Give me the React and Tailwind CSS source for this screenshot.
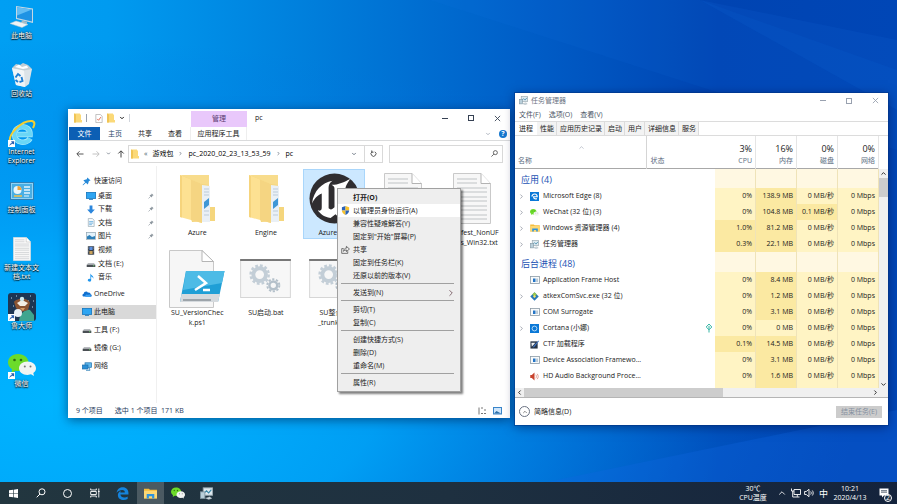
import { ChevronDown, ChevronRight, ChevronUp } from 'lucide-react';

const desktopItems = [
  { icon: <MonitorIcon />, lines: ['此电脑'] },
  { icon: <BinIcon />, lines: ['回收站'] },
  { icon: <IeIcon />, lines: ['Internet', 'Explorer'], shortcut: true },
  { icon: <PanelIcon />, lines: ['控制面板'] },
  { icon: <TextFileIcon className="h-6 w-[18px]" />, lines: ['新建文本文', '档.txt'] },
  { icon: <MasterIcon />, lines: ['鲁大师'], shortcut: true },
  { icon: <WechatIcon className="h-6 w-7" />, lines: ['微信'], shortcut: true },
];

const quickItems = [
  { name: '桌面', pinned: true, icon: <DeskIcon /> },
  { name: '下载', pinned: true, icon: <DownIcon /> },
  { name: '文档', pinned: true, icon: <DocIcon /> },
  { name: '图片', pinned: true, icon: <PictureIcon /> },
  { name: '视频', icon: <VideoIcon /> },
  { name: '文档 (E:)', icon: <DriveIcon /> },
  { name: '音乐', icon: <MusicIcon /> },
];

const places = [
  { name: 'OneDrive', icon: <CloudIcon /> },
  { name: '此电脑', icon: <DeskIcon />, active: true },
  { name: '工具 (F:)', icon: <DriveIcon /> },
  { name: '镜像 (G:)', icon: <DriveIcon /> },
  { name: '网络', icon: <NetIcon /> },
];

const files = [
  { id: 1, lines: ['Azure'], icon: <BigFolder /> },
  { id: 2, lines: ['Engine'], icon: <BigFolder /> },
  { id: 3, lines: ['Azure.exe'], icon: <UnrealIcon />, selected: true },
  { id: 4, lines: [], icon: <TextFileIcon className="h-[51px] w-[38px]" /> },
  { id: 5, lines: ['Manifest_NonUF', 'SFiles_Win32.txt'], icon: <TextFileIcon className="h-[51px] w-[38px]" /> },
  { id: 6, lines: ['SU_VersionChec', 'k.ps1'], icon: <PowerShellIcon /> },
  { id: 7, lines: ['SU启动.bat'], icon: <BatIcon /> },
  { id: 8, lines: ['SU整合包', '_trunk.bat'], icon: <BatIcon /> },
];

const menuGroups = [
  [
    { name: '打开(O)', bold: true },
    { name: '以管理员身份运行(A)', icon: <ShieldIcon />, hover: true },
    { name: '兼容性疑难解答(Y)' },
    { name: '固定到"开始"屏幕(P)' },
    { name: '共享', icon: <ShareIcon /> },
    { name: '固定到任务栏(K)' },
    { name: '还原以前的版本(V)' },
  ],
  [{ name: '发送到(N)', sub: true }],
  [{ name: '剪切(T)' }, { name: '复制(C)' }],
  [{ name: '创建快捷方式(S)' }, { name: '删除(D)' }, { name: '重命名(M)' }],
  [{ name: '属性(R)' }],
];

const apps = [
  { name: 'Microsoft Edge (8)', icon: <EdgeTile />, open: true, v: ['0%', '138.9 MB', '0 MB/秒', '0 Mbps'], hot: [1] },
  { name: 'WeChat (32 位) (3)', icon: <WechatIcon className="h-[9px] w-[9px]" />, open: true, v: ['0%', '104.8 MB', '0.1 MB/秒', '0 Mbps'], hot: [1, 2] },
  { name: 'Windows 资源管理器 (4)', icon: <ExplorerIcon className="h-2 w-[10px]" />, open: true, v: ['1.0%', '81.2 MB', '0 MB/秒', '0 Mbps'], hot: [0, 1] },
  { name: '任务管理器', icon: <TaskIcon />, open: true, v: ['0.3%', '22.1 MB', '0 MB/秒', '0 Mbps'], hot: [0, 1] },
];

const background = [
  { name: 'Application Frame Host', icon: <AppIcon />, v: ['0%', '8.4 MB', '0 MB/秒', '0 Mbps'], hot: [1] },
  { name: 'atkexComSvc.exe (32 位)', icon: <AtkIcon />, open: true, v: ['0%', '1.2 MB', '0 MB/秒', '0 Mbps'], hot: [1] },
  { name: 'COM Surrogate', icon: <AppIcon />, v: ['0%', '3.1 MB', '0 MB/秒', '0 Mbps'], hot: [1] },
  { name: 'Cortana (小娜)', icon: <CortanaIcon />, open: true, leaf: true, v: ['0%', '0 MB', '0 MB/秒', '0 Mbps'], hot: [] },
  { name: 'CTF 加载程序', icon: <PenIcon />, v: ['0.1%', '14.5 MB', '0 MB/秒', '0 Mbps'], hot: [0, 1] },
  { name: 'Device Association Framewo...', icon: <AppIcon />, v: ['0%', '3.1 MB', '0 MB/秒', '0 Mbps'], hot: [1] },
  { name: 'HD Audio Background Proce...', icon: <SpeakerIcon />, v: ['0%', '1.6 MB', '0 MB/秒', '0 Mbps'], hot: [1] },
];

/* ---------- icons ---------- */

function MonitorIcon() {
  return (
    <svg viewBox="0 0 26 24" className="h-6 w-[26px]">
      <path d="M7 1 L24 3.500 V18 L7 14Z" fill="#c4d8e4" />
      <path d="M8 2.200 L23 4.500 V16.500 L8 13Z" fill="#1f93e4" />
      <path d="M8 2.200 L23 4.500 L8 10.500Z" fill="#62bdf4" />
      <path d="M13 15.500 L18 16.800 V19 L12 18Z" fill="#a9bcc6" />
      <path d="M1 18.500 L7 16 L19 19.500 L13 22.500Z" fill="#eef3f5" stroke="#b8c8d0" strokeWidth=".5" />
    </svg>
  );
}

function BinIcon() {
  return (
    <svg viewBox="0 0 24 26" className="h-[26px] w-6">
      <path d="M2 6 L22 7 L19 22 L15 25 L6 23Z" fill="#dbe3e8" />
      <path d="M2 6 L14 8 L15 25 L6 23Z" fill="#f1f5f7" />
      <path d="M2 6 L6 2 L10 3 L13 1 L18 3 L22 7 L14 8.500Z" fill="#c3ced4" />
      <path d="M5 5 L9 2.500 L12 5 L17 3.500 L18 6 L13 7Z" fill="#fff" />
      <path d="M5.500 15.500 L8 12 L10.500 14 M11.500 15 L12.500 19 L9.500 20 M8 20 L5.500 18" fill="none" stroke="#1f7fd4" strokeWidth="1.900" />
    </svg>
  );
}

function IeIcon() {
  return (
    <svg viewBox="0 0 28 28" className="h-7 w-7">
      <path d="M22 19.500 C19.500 25 6.500 25 6.500 15.500 C6.500 5.500 22.500 5 22 15.500 H9" fill="none" stroke="#a2e9fb" strokeWidth="5.500" />
      <path d="M22 19.500 C19.500 25 6.500 25 6.500 15.500 C6.500 5.500 22.500 5 22 15.500 H9" fill="none" stroke="#6ad6f6" strokeWidth="4" />
      <path d="M2 23 C0 15 14 1 24 2 C28 3 26 7 25 9" fill="none" stroke="#f6cf2f" strokeWidth="2" />
    </svg>
  );
}

function PanelIcon() {
  return (
    <svg viewBox="0 0 24 18" className="h-[18px] w-6">
      <rect x=".5" y=".5" width="23" height="17" fill="#8fd3f5" stroke="#2f7fb5" />
      <rect x="2" y="2" width="20" height="14" fill="#48aee4" />
      <circle cx="7.500" cy="8" r="4" fill="#e9f5fb" />
      <path d="M7.500 8 V4 A4 4 0 0 1 11.500 8Z" fill="#f2a43a" />
      <path d="M14 5 H20 M14 8 H20 M14 11 H20" stroke="#e6f5fd" strokeWidth="1.500" />
      <path d="M4 14 H12" stroke="#f6c14a" strokeWidth="1.500" />
      <path d="M14 14 H19" stroke="#e6f5fd" strokeWidth="1" />
    </svg>
  );
}

function TextFileIcon({ className }) {
  return (
    <svg viewBox="0 0 38 51" preserveAspectRatio="none" className={className}>
      <path d="M.5 .5 H28 L37.500 10.500 V50.500 H.5Z" fill="#f7f7f7" stroke="#c9c9c9" />
      <path d="M28 .5 V10.500 H37.500" fill="#fff" stroke="#b3b3b3" />
      <path d="M4 6 H24 M4 10 H24 M4 15 H34 M4 19 H34 M4 24 H34 M4 28 H34 M4 33 H34 M4 37 H34 M4 42 H34 M4 46 H34" stroke="#c0c3c6" strokeWidth="1.200" />
    </svg>
  );
}

function MasterIcon() {
  return (
    <svg viewBox="0 0 28 28" className="h-7 w-7">
      <rect width="28" height="28" rx="3" fill="#1d3553" />
      <path d="M3 5h1M8 3h1M22 3h1M25 8h1M5 13h1M24 14h1M20 8h1" stroke="#b7d7f2" strokeWidth="1" />
      <path d="M11 28 C12 20 17 16 22 17 L26 22 V28Z" fill="#3fa58f" />
      <path d="M6 9 C8 5 20 4 22 10 L20 17 L13 19 L8 15Z" fill="#8a5433" />
      <path d="M9 10 L14 7 L20 10 L17 13 L12 13Z" fill="#f3efe6" />
      <circle cx="14" cy="6" r="2.200" fill="#cde9ee" />
      <circle cx="10" cy="20" r="4" fill="#e8f1f7" />
      <path d="M12 15 L17 15 L15 18Z" fill="#d79a63" />
    </svg>
  );
}

function WechatIcon({ className }) {
  return (
    <svg viewBox="0 0 28 24" className={className}>
      <path d="M10 1 C4 1 0 5 0 9.500 C0 12.500 2 15 4 16.300 L3.500 20 L7.500 17.700 C17 19 20.500 14 20.500 9.500 C20.500 5 16 1 10 1Z" fill="#6cdb2a" />
      <path d="M19.500 8.500 C14.500 8.500 11 11.500 11 15.300 C11 19 14.500 22 19.500 22 L23 21.300 L26 23 L25.300 20 C27 19 28 17.300 28 15.300 C28 11.500 24.500 8.500 19.500 8.500Z" fill="#f2f4f2" />
      <circle cx="6.500" cy="7" r="1.300" fill="#2c6b12" />
      <circle cx="13" cy="7" r="1.300" fill="#2c6b12" />
      <circle cx="16.800" cy="13.500" r="1" fill="#777" />
      <circle cx="22.500" cy="13.500" r="1" fill="#777" />
    </svg>
  );
}

function DeskIcon() {
  return (
    <svg viewBox="0 0 10 8" className="h-2 w-[10px]">
      <rect x=".4" y=".4" width="9.200" height="6" fill="#2ea5f2" stroke="#1576bd" strokeWidth=".8" />
      <path d="M3 7.500 H7" stroke="#1576bd" strokeWidth=".8" />
    </svg>
  );
}

function DownIcon() {
  return (
    <svg viewBox="0 0 10 10" className="h-[9px] w-[10px]">
      <path d="M3.400 .5 H6.600 V5 H9.300 L5 9.600 L.7 5 H3.400Z" fill="#2b86dc" />
    </svg>
  );
}

function DocIcon() {
  return (
    <svg viewBox="0 0 10 10" className="h-[9px] w-[10px]">
      <path d="M2 .5 H6.500 L8.500 2.500 V9.500 H2Z" fill="#f4f8fb" stroke="#90a4b0" strokeWidth=".7" />
      <path d="M3 4 H7.500 M3 5.700 H7.500 M3 7.400 H6" stroke="#4ea0d8" strokeWidth=".8" />
    </svg>
  );
}

function PictureIcon() {
  return (
    <svg viewBox="0 0 10 8" className="h-2 w-[10px]">
      <rect x=".4" y=".4" width="9.200" height="7.200" fill="#e3f2fb" stroke="#8fa4b2" strokeWidth=".7" />
      <path d="M1 6.900 L1 4.500 L3.500 3 L6 5 L9 4 V6.900Z" fill="#2d7fb8" />
    </svg>
  );
}

function VideoIcon() {
  return (
    <svg viewBox="0 0 10 10" className="h-[9px] w-[10px]">
      <rect x="1.500" y=".3" width="7" height="9.400" fill="#2c3440" />
      <rect x="3.200" y="1" width="3.600" height="3.500" fill="#5b8fe0" />
      <rect x="3.200" y="5.500" width="3.600" height="3.500" fill="#caa25a" />
      <path d="M2.300 1 V9.500 M7.700 1 V9.500" stroke="#cfd6dd" strokeWidth=".6" strokeDasharray=".8 .8" />
    </svg>
  );
}

function DriveIcon() {
  return (
    <svg viewBox="0 0 10 8" className="h-2 w-[10px]">
      <path d="M2 3 H8 L9.300 5 H.7Z" fill="#b8bcc0" />
      <rect x=".7" y="4.800" width="8.600" height="2.200" fill="#4a4f54" />
      <rect x="7" y="5.400" width="1.300" height=".8" fill="#6fe06f" />
    </svg>
  );
}

function MusicIcon() {
  return (
    <svg viewBox="0 0 10 10" className="h-[9px] w-[10px]">
      <path d="M4.300 .5 C5 2.500 8.500 3 7.500 6.300 C7 4.500 6 4 5.200 3.800 V8 A1.900 1.500 0 1 1 4.300 6.800Z" fill="#1e96ee" />
    </svg>
  );
}

function CloudIcon() {
  return (
    <svg viewBox="0 0 10 8" className="h-2 w-[10px]">
      <path d="M2 6.500 C0 6.500 0 4 1.700 3.800 C2 1.500 5 .8 6 2.700 C8 2.300 8.600 3.600 8.500 4.200 C10.300 4.500 10 6.800 8.500 6.800Z" fill="#0f6fcf" />
      <path d="M3.500 7 C2.500 5 5 3.500 6 5 C8 4 9 5 8.800 7Z" fill="#3ea1f2" />
    </svg>
  );
}

function NetIcon() {
  return (
    <svg viewBox="0 0 10 9" className="h-[9px] w-[10px]">
      <rect x="3" y=".8" width="6.500" height="4.500" fill="#62b9ec" stroke="#1d6fae" strokeWidth=".7" />
      <rect x=".4" y="3" width="5.600" height="4" fill="#2a8fd6" stroke="#1d6fae" strokeWidth=".7" />
      <path d="M4 8.300 H8 L7 5.500" stroke="#2d7fb8" strokeWidth=".8" fill="none" />
    </svg>
  );
}

function StarPin() {
  return (
    <svg viewBox="0 0 10 10" className="h-[9px] w-[9px]">
      <path d="M6 .5 L9.500 4 L7.700 4.400 L6.500 8.200 L4.300 6.300 L1 9.500 L.8 8.700 L3.500 5.700 L1.500 3.500 L5.300 2.400Z" fill="#2589d8" />
    </svg>
  );
}

function PinIcon() {
  return (
    <svg viewBox="0 0 8 8" className="h-[6px] w-[6px]">
      <path d="M5 .5 L7.500 3 L6 3.500 L5 6 L2 3 L4.500 2Z" fill="#8d979f" />
      <path d="M3.500 4.500 L.7 7.300" stroke="#8d979f" strokeWidth=".9" />
    </svg>
  );
}

function SmallFolder() {
  return (
    <svg viewBox="0 0 8 10" className="h-[10px] w-2">
      <path d="M0 .5 H6 V1.500 H7 V7 H8 V9.500 H0Z" fill="#fbd978" />
      <path d="M0 .5 L2 1.500 V9.500 H0Z" fill="#f0c455" />
    </svg>
  );
}

function BigFolder() {
  return (
    <svg viewBox="0 0 38 50" className="h-[50px] w-[38px]">
      <path d="M2 2 H31 V33 H37 V47 H31 L14 48Z" fill="#f5d67d" />
      <path d="M24 11 L32 12 V48 H23Z" fill="#eaf0f6" />
      <path d="M26 15 H31 M26 18 H31 M26 21 H31 M26 37 H31 M26 41 H31" stroke="#bccbd9" strokeWidth="1" />
      <path d="M26 28 L31 24 V31 L26 35Z" fill="#3f97d6" />
      <path d="M2 1 L24 10 V49 L2 43Z" fill="#fde192" />
      <path d="M13 5.500 L24 10 V49 L13 46Z" fill="#f5d582" />
      <path d="M2 1 H31 V11 L24 10Z" fill="#f8dc8c" />
      <path d="M2 1 V43 L4 43.500 V2Z" fill="#f6d47c" />
    </svg>
  );
}

function UnrealIcon() {
  return (
    <svg viewBox="0 0 52 52" className="h-[51px] w-[51px]">
      <circle cx="26" cy="26" r="25.500" fill="#2f2d30" />
      <path d="M3 31 C5 18 13 10 24 8 C20 11 20 13 20 17 V36 C22 38 24 37 26 35 V16 C26 13 24 13 23 12 C30 12 36 9 42 6 C38 12 37 14 37 18 V34 C42 32 45 29 47 25 C45 36 38 42 31 46 L27 42 L22 46 C15 45 11 41 9 38 C12 39 13 38 13 35 V21 C8 23 6 26 3 31Z" fill="#fff" />
    </svg>
  );
}

function PowerShellIcon() {
  return (
    <svg viewBox="0 0 56 58" className="h-[58px] w-14">
      <path d="M.5 .5 H33 L44.500 11.500 V57.500 H.5Z" fill="#f6f6f6" stroke="#c8c8c8" />
      <path d="M33 .5 V11.500 H44.500Z" fill="#fff" stroke="#b5b5b5" />
      <path d="M17 21 H55.500 L49 52 H11Z" fill="#1f9fd6" />
      <path d="M17 21 H55.500 L53 33 L14 40Z" fill="#4dbbe6" />
      <path d="M12.500 44 H51 L49 52 H11Z" fill="#d5dade" />
      <path d="M14 50 H42" stroke="#8a9298" strokeWidth="1.500" />
      <path d="M29 26 L37 33 L26 40 M34 40 H41" stroke="#fff" strokeWidth="2.500" fill="none" />
    </svg>
  );
}

function BatIcon() {
  return (
    <svg viewBox="0 0 52 40" className="h-[39px] w-[51px]">
      <rect x=".5" y=".5" width="51" height="39" fill="#f7f7f7" stroke="#d5d5d5" />
      <path d="M0 1 H52" stroke="#777" strokeWidth="2" />
      <circle cx="20" cy="16" r="6.500" fill="none" stroke="#c3ced7" strokeWidth="4" />
      <circle cx="20" cy="16" r="9.300" fill="none" stroke="#c3ced7" strokeWidth="2.500" strokeDasharray="2.800 2.070" />
      <circle cx="34" cy="27" r="4" fill="none" stroke="#b4c0ca" strokeWidth="2.500" />
      <circle cx="34" cy="27" r="6.200" fill="none" stroke="#b4c0ca" strokeWidth="2" strokeDasharray="2.300 1.600" />
    </svg>
  );
}

function ShieldIcon() {
  return (
    <svg viewBox="0 0 10 10" className="h-[9px] w-[9px]">
      <path d="M5 0 L1 1.500 V5 H5Z" fill="#2a62b8" />
      <path d="M5 0 L9 1.500 V5 H5Z" fill="#f7c22c" />
      <path d="M1 5 C1 7.500 3 9 5 10 V5Z" fill="#f7c22c" />
      <path d="M9 5 C9 7.500 7 9 5 10 V5Z" fill="#2a62b8" />
    </svg>
  );
}

function ShareIcon() {
  return (
    <svg viewBox="0 0 10 10" className="h-[9px] w-[9px]" fill="none" stroke="#444" strokeWidth=".8">
      <path d="M3 4 H.8 V9.300 H7.500 V7" />
      <path d="M2.800 7 C3 4.500 4.500 3.500 6 3.500 V1.500 L9.400 4.500 L6 7.300 V5.500 C4.500 5.500 3.600 6 2.800 7Z" />
    </svg>
  );
}

function EdgeTile() {
  return (
    <svg viewBox="0 0 10 10" className="h-[9px] w-[9px]">
      <rect width="10" height="10" fill="#0a78d7" />
      <path d="M2 5 C3 1 8 1.500 8 5.300 H4 C4 8 6.500 8 7.600 7.200" fill="none" stroke="#fff" strokeWidth="1.300" />
    </svg>
  );
}

function EdgeIcon() {
  return (
    <svg viewBox="0 0 24 24" className="h-[13px] w-[13px]">
      <path d="M1 10.800 C2.500 3 7 .5 12.500 .5 C19 .5 23 5 23 11 V14 H8.200 C8.400 20.500 17.500 20.500 21.500 17.500 V22 C14 26 3 23.500 3.500 14.500 C3.700 11 6 8.500 9 7.300 C8.300 8.300 8 9.300 8 10.300 H16.300 C16.500 3.500 6.500 4.500 1 10.800Z" fill="#1583dc" />
    </svg>
  );
}

function ExplorerIcon({ className }) {
  return (
    <svg viewBox="0 0 24 20" className={className}>
      <path d="M0 1 H9 L11 3 H24 V19 H0Z" fill="#f5bd3c" />
      <rect y="5" width="24" height="14" fill="#fdd874" />
      <path d="M5 19 V11 H19 V19 H15 V15 H9 V19Z" fill="#2f93dd" />
    </svg>
  );
}

function TaskIcon({ className = 'h-[9px] w-[9px]' }) {
  return (
    <svg viewBox="0 0 12 12" className={className}>
      <rect x="3" y=".8" width="8.500" height="6.800" fill="#dfeaf0" stroke="#9aa8b0" strokeWidth=".9" />
      <path d="M4 5.500 L6 3.500 L8 5.500 L10.500 2.500" fill="none" stroke="#3987a8" strokeWidth="1" />
      <rect x=".5" y="4.500" width="4" height="6" fill="#b9cfda" stroke="#8197a3" strokeWidth=".8" />
      <path d="M5 10.300 L9 9 L11 10.500 L8 11.500Z" fill="#cfd9de" stroke="#8ea0aa" strokeWidth=".4" />
    </svg>
  );
}

function AppIcon() {
  return (
    <svg viewBox="0 0 10 8" className="h-2 w-[10px]">
      <rect x=".5" y=".5" width="9" height="7" fill="#f8fafb" stroke="#8c9ba6" strokeWidth=".8" />
      <rect x="3" y="2.500" width="2.500" height="3.500" fill="#2374c6" />
      <rect x="6.300" y="2.500" width="1.500" height="3.500" fill="#a8bccb" />
    </svg>
  );
}

function AtkIcon() {
  return (
    <svg viewBox="0 0 10 10" className="h-[9px] w-[9px]">
      <path d="M5 .3 L9.700 5 L5 9.700 L.3 5Z" fill="#2a78b8" />
      <path d="M5 .3 L7.500 2.800 L5 5 L2.500 2.800Z" fill="#9cc94a" />
      <path d="M5 3.300 L6.700 5 L5 6.700 L3.300 5Z" fill="#f2e36a" />
    </svg>
  );
}

function CortanaIcon() {
  return (
    <svg viewBox="0 0 10 10" className="h-[9px] w-[9px]">
      <rect width="10" height="10" fill="#0a78d7" />
      <circle cx="5" cy="5" r="2.700" fill="none" stroke="#d8ecfb" strokeWidth=".9" />
    </svg>
  );
}

function PenIcon() {
  return (
    <svg viewBox="0 0 10 10" className="h-[9px] w-[9px]">
      <rect x=".5" y="1.500" width="8" height="8" fill="#263345" />
      <path d="M1.500 3 H6 L2 7.500Z" fill="#eef2f6" />
      <path d="M9.500 .5 L4 6.500 L3 8.500 L5 7.500 L10 1.500Z" fill="#3f76c4" />
    </svg>
  );
}

function SpeakerIcon() {
  return (
    <svg viewBox="0 0 10 10" className="h-[9px] w-[9px]">
      <path d="M.3 3.300 H2 L5 .5 V9.500 L2 6.700 H.3Z" fill="#c8432e" />
      <path d="M6.500 3 C7.300 4.500 7.300 5.500 6.500 7 M8 2 C9.500 4 9.500 6 8 8" fill="none" stroke="#d98c7e" strokeWidth=".9" />
    </svg>
  );
}

/* ---------- desktop ---------- */

function Wallpaper() {
  return (
    <svg viewBox="0 0 897 504" preserveAspectRatio="none" className="absolute inset-0 h-full w-full">
      <defs>
        <linearGradient id="sky" x1="0" x2="1" y1="0" y2="0">
          <stop offset="0" stopColor="#009ff3" />
          <stop offset=".12" stopColor="#009bf0" />
          <stop offset=".35" stopColor="#007edb" />
          <stop offset=".6" stopColor="#005cc6" />
          <stop offset=".8" stopColor="#0044b2" />
          <stop offset="1" stopColor="#0046b6" />
        </linearGradient>
        <radialGradient id="glow" gradientUnits="userSpaceOnUse" cx="0" cy="0" r="1" gradientTransform="translate(60 400) scale(800 360)">
          <stop offset="0" stopColor="#00b4ff" />
          <stop offset=".4" stopColor="#00a8fb" stopOpacity=".8" />
          <stop offset="1" stopColor="#0070e0" stopOpacity="0" />
        </radialGradient>
      </defs>
      <rect width="897" height="504" fill="url(#sky)" />
      <rect width="897" height="504" fill="url(#glow)" />
      <path d="M430 0 L700 0 L897 70 V150Z" fill="#1e7cf0" opacity=".08" />
      <path d="M700 0 L897 40 V110Z" fill="#2a8cff" opacity=".08" />
      <path d="M897 410 L440 504 H897Z" fill="#1268e0" opacity=".3" />
    </svg>
  );
}

function DesktopIcons() {
  return (
    <nav className="relative grid w-[43px] auto-rows-[58px] pt-[3px]">
      {desktopItems.map((item) => (
        <button key={item.lines[0]} type="button" className="flex flex-col items-center">
          <span className="relative flex h-7 items-center justify-center">
            {item.icon}
            {item.shortcut && (
              <svg viewBox="0 0 8 8" className="absolute bottom-0 left-0 h-[7px] w-[7px]">
                <rect width="8" height="8" fill="#fff" />
                <path d="M1.500 7 C2 4.500 3 3.500 4.500 3.300 L3.500 1.500 H7 V5 L5.500 4.200 C4 4.500 3 5 1.500 7Z" fill="#2a5fb0" />
              </svg>
            )}
          </span>
          <span className="whitespace-nowrap text-center leading-[9px] text-white [text-shadow:0_0_2px_#000,0_1px_1px_#000]">
            {item.lines.map((line) => (
              <span key={line} className="block">
                {line}
              </span>
            ))}
          </span>
        </button>
      ))}
    </nav>
  );
}

/* ---------- file explorer ---------- */

function WindowButtons({ color }) {
  return (
    <div className={`flex ${color}`}>
      <button type="button" aria-label="最小化" className="flex w-[26px] items-center justify-center">
        <span className="w-[6px] border-t border-current" />
      </button>
      <button type="button" aria-label="最大化" className="flex w-[26px] items-center justify-center">
        <span className="h-[6px] w-[6px] border border-current" />
      </button>
      <button type="button" aria-label="关闭" className="flex w-[26px] items-center justify-center">
        <svg viewBox="0 0 8 8" className="h-[7px] w-[7px]" stroke="currentColor" strokeWidth="1">
          <path d="M1 1 L7 7 M7 1 L1 7" />
        </svg>
      </button>
    </div>
  );
}

function ExplorerWindow() {
  return (
    <section className="absolute left-[68px] top-[109px] flex h-[309px] w-[442px] flex-col bg-white shadow-[0_2px_10px_rgba(0,20,60,0.55)]">
      <header className="flex h-[18px] justify-between">
        <div className="flex">
          <div className="flex w-[123px] items-center gap-1 pl-[6px]">
            <SmallFolder />
            <span className="h-2 border-l border-gray-400" />
            <svg viewBox="0 0 8 10" className="ml-1 h-[9px] w-2">
              <path d="M.5 .5 H5.500 L7.500 2.500 V9.500 H.5Z" fill="#fff" stroke="#aaa" strokeWidth=".8" />
              <path d="M2 5.500 L3.500 7 L6 3.500" fill="none" stroke="#e0604a" strokeWidth="1" />
            </svg>
            <SmallFolder />
            <ChevronDown className="h-[6px] w-[6px]" strokeWidth={4} />
            <span className="h-2 border-l border-gray-300" />
          </div>
          <div className="mt-[2px] flex w-[56px] items-center justify-center bg-[#e9c8fb] text-[#5b3a6e]">管理</div>
          <h2 className="flex items-center pl-2">pc</h2>
        </div>
        <WindowButtons color="text-gray-700" />
      </header>
      <div className="flex h-[14px] items-stretch border-b border-[#dadbdc]">
        <button type="button" className="ml-px w-[31px] bg-[#0c5fb4] text-white">文件</button>
        <button type="button" className="w-[30px] text-[#2b4a6b]">主页</button>
        <button type="button" className="w-[30px]">共享</button>
        <button type="button" className="w-[30px]">查看</button>
        <button type="button" className="w-[57px] border-x border-[#eee]">应用程序工具</button>
        <div className="ml-auto flex items-center gap-2 pr-[3px]">
          <ChevronDown className="h-[6px] w-[6px] text-gray-400" strokeWidth={3} />
          <button type="button" aria-label="帮助" className="h-2 w-2 rounded-full bg-[#1577cf] font-bold leading-2 text-white">
            ?
          </button>
        </div>
      </div>

      <div className="flex h-[25px] items-center text-gray-600">
        <div className="flex w-[60px] items-center gap-[6px] pl-2">
          <svg viewBox="0 0 8 8" className="h-2 w-2" fill="none" stroke="#444" strokeWidth=".9"><path d="M7.500 4 H1 M3.500 1.300 L.8 4 L3.500 6.700" /></svg>
          <svg viewBox="0 0 8 8" className="ml-[2px] h-2 w-2" fill="none" stroke="#bbb" strokeWidth=".9"><path d="M.5 4 H7 M4.500 1.300 L7.200 4 L4.500 6.700" /></svg>
          <ChevronDown className="h-[5px] w-[5px]" strokeWidth={3} />
          <svg viewBox="0 0 8 8" className="h-2 w-2" fill="none" stroke="#444" strokeWidth="1"><path d="M4 7.500 V1 M1.300 3.500 L4 .8 L6.700 3.500" /></svg>
        </div>
        <div className="flex h-[18px] flex-1 items-center gap-[5px] border border-[#d9d9d9] pl-[2px]">
          <SmallFolder />
          <span>«</span>
          <button type="button" className="text-black">游戏包</button>
          <ChevronRight className="h-[5px] w-[5px]" strokeWidth={3} />
          <button type="button" className="text-black">pc_2020_02_23_13_53_59</button>
          <ChevronRight className="h-[5px] w-[5px]" strokeWidth={3} />
          <button type="button" className="text-black">pc</button>
          <ChevronDown className="ml-auto mr-[2px] h-[6px] w-[6px]" strokeWidth={3} />
          <button type="button" aria-label="刷新" className="flex h-4 w-[18px] items-center justify-center border-l border-[#d9d9d9]">
            <svg viewBox="0 0 8 8" className="h-[7px] w-[7px]" fill="none" stroke="#444" strokeWidth="1"><path d="M2.500 2 A2.800 2.800 0 1 0 5.500 2 M2 .5 V2.500 H4" /></svg>
          </button>
        </div>
        <label className="ml-[6px] mr-[7px] flex h-[18px] w-[114px] items-center border border-[#d9d9d9] pr-1">
          <input type="text" aria-label="搜索" className="w-full min-w-0 flex-1 outline-none" />
          <svg viewBox="0 0 8 8" className="h-[7px] w-[7px] shrink-0" fill="none" stroke="#444" strokeWidth=".9"><circle cx="5" cy="3" r="2.300" /><path d="M3.300 4.700 L.5 7.500" /></svg>
        </label>
      </div>

      <div className="flex min-h-0 flex-1">
        <nav className="w-[89px] border-r border-[#f0f0f0] pt-[7px]">
          <button type="button" className="flex h-4 w-full items-center gap-[3px] pl-[14px]">
            <StarPin />
            快速访问
          </button>
          <div className="grid h-[95px] grid-rows-7">
            {quickItems.map((item) => (
              <button key={item.name} type="button" className="flex w-full items-center gap-[2px] pl-[18px]">
                {item.icon}
                {item.name}
                {item.pinned && (
                  <span className="ml-auto mr-[2px]">
                    <PinIcon />
                  </span>
                )}
              </button>
            ))}
          </div>
          <div className="flex flex-col gap-1 pt-[3px]">
            {places.map((item) => (
              <button
                key={item.name}
                type="button"
                className={`flex h-[14px] w-full items-center gap-[2px] pl-[14px] ${item.active ? 'bg-[#d9d9d9]' : ''}`}
              >
                {item.icon}
                {item.name}
              </button>
            ))}
          </div>
        </nav>
        <ul className="grid flex-1 auto-rows-[80px] grid-cols-5 pl-[6px] pr-1 pt-[3px]">
          {files.map((file) => (
            <li key={file.id} className="flex justify-center">
              <button
                type="button"
                className={`flex h-[70px] w-[62px] flex-col items-center ${file.selected ? 'bg-[#cce8ff] outline -outline-offset-1 outline-[#a9d6fb]' : ''}`}
              >
                <span className="flex h-[59px] shrink-0 items-center justify-center">{file.icon}</span>
                <span className="whitespace-nowrap leading-[10px]">
                  {file.lines.map((line) => (
                    <span key={line} className="block">
                      {line}
                    </span>
                  ))}
                </span>
              </button>
            </li>
          ))}
        </ul>
      </div>

      <footer className="flex h-[15px] items-center gap-3 px-2 text-[#1e395b]">
        <span>9 个项目</span>
        <span>选中 1 个项目&nbsp; 171 KB</span>
        <svg viewBox="0 0 24 8" className="ml-auto h-2 w-6">
          <path d="M1 .5 V7.500 M3 1 H5 M3 6.500 H5 M6 3 H8 M6 6.500 H8" stroke="#777" strokeWidth="1" />
          <rect x="15.500" y=".5" width="8" height="6.500" fill="#cfe6fb" stroke="#3a85c9" />
          <path d="M16 6.500 L18.500 4 L23 6.500Z" fill="#2c6fa8" />
        </svg>
      </footer>
    </section>
  );
}

function ContextMenu() {
  return (
    <div role="menu" className="absolute left-[337px] top-[188px] w-[124px] border border-[#a0a0a0] bg-[#eeeeee] py-[2px] shadow-[2px_2px_2px_rgba(0,0,0,0.5)]">
      {menuGroups.map((group, i) => (
        <div key={group[0].name}>
          {i > 0 && (
            <div role="separator" className="pb-[2px] pl-[3px] pr-[6px] pt-px">
              <div className="border-t border-[#a0a0a0]" />
            </div>
          )}
          {group.map((item) => (
            <button
              key={item.name}
              type="button"
              role="menuitem"
              className={`flex h-[13px] w-full items-center ${item.hover ? 'bg-white' : ''} ${item.bold ? 'font-bold' : ''}`}
            >
              <span className="flex w-[15px] justify-center">{item.icon}</span>
              {item.name}
              {item.sub && <ChevronRight className="ml-auto mr-1 h-[10px] w-[10px] text-[#70505a]" strokeWidth={2} />}
            </button>
          ))}
        </div>
      ))}
    </div>
  );
}

/* ---------- task manager ---------- */

function GroupRow({ title }) {
  return (
    <tr className="h-5">
      <th colSpan={2} scope="rowgroup" className="pl-[6px] pt-[3px] text-left text-[9px] font-normal leading-[12px] text-[#1c52b4]">
        {title}
      </th>
      {[0, 1, 2, 3].map((n) => (
        <td key={n} className="border-r border-[#efe3b8] bg-[#fff8e2]" />
      ))}
    </tr>
  );
}

function ProcessRow({ row }) {
  return (
    <tr className="h-4">
      <td className="p-0">
        <div className="flex items-center whitespace-nowrap">
          <span className="flex w-[15px] shrink-0 items-center pl-[3px]">
            {row.open && <ChevronRight className="h-[7px] w-[7px] text-gray-500" strokeWidth={2} />}
          </span>
          <span className="flex w-[13px] shrink-0 items-center">{row.icon}</span>
          {row.name}
        </div>
      </td>
      <td className="p-0">
        {row.leaf && (
          <svg viewBox="0 0 8 10" className="ml-auto mr-[2px] h-[10px] w-2" fill="none" stroke="#35b5a5" strokeWidth="1">
            <path d="M4 9.500 V3 M4 1 L6.800 4 L4 6.800 L1.200 4Z" />
          </svg>
        )}
      </td>
      {row.v.map((value, i) => (
        <td
          key={i}
          className={`whitespace-nowrap border-r border-[#efe3b8] p-0 pr-[3px] text-right ${row.hot.includes(i) ? 'bg-[#fbe9a2]' : 'bg-[#fff4c4]'}`}
        >
          {value}
        </td>
      ))}
    </tr>
  );
}

function TaskManager() {
  const totals = [['3%', 'CPU'], ['16%', '内存'], ['0%', '磁盘'], ['0%', '网络']];
  return (
    <section className="absolute left-[515px] top-[93px] w-[373px] bg-white shadow-[0_0_0_1px_rgba(0,50,130,0.5),0_2px_10px_rgba(0,10,60,0.5)]">
      <header className="flex h-[15px] justify-between text-gray-500">
        <h2 className="flex items-center gap-[3px] pl-1">
          <TaskIcon />
          任务管理器
        </h2>
        <WindowButtons color="text-gray-400" />
      </header>
      <div className="flex h-[13px] items-center gap-2 pl-1 text-gray-600">
        <button type="button">文件(F)</button>
        <button type="button">选项(O)</button>
        <button type="button">查看(V)</button>
      </div>
      <div className="flex h-[15px] items-stretch border-b border-t border-[#dcdcdc]" role="tablist">
        <button type="button" role="tab" className="w-[22px]">进程</button>
        {['性能', '应用历史记录', '启动', '用户', '详细信息', '服务'].map((tab) => (
          <button key={tab} type="button" role="tab" className="border-r border-[#dcdcdc] bg-[#f3f3f3] pl-[3px] pr-[2px]">
            {tab}
          </button>
        ))}
      </div>

      <div className="flex">
        <table className="min-w-0 flex-1 table-fixed border-collapse">
          <colgroup>
            <col className="w-[131px]" />
            <col />
            <col className="w-[41px]" />
            <col className="w-[41px]" />
            <col className="w-[41px]" />
            <col className="w-[41px]" />
          </colgroup>
          <thead>
            <tr className="h-8 border-b border-[#a8a8a8] text-[#5a6b80]">
              <th scope="col" className="border-r border-[#d5d5d5] p-0 pl-[3px] text-left align-bottom font-normal">
                <ChevronUp className="mx-auto mb-[5px] h-[7px] w-[7px] text-gray-400" strokeWidth={2} />
                <span className="block pb-[2px] leading-[10px]">名称</span>
              </th>
              <th scope="col" className="p-0 pb-[2px] pl-1 text-left align-bottom font-normal leading-[10px]">状态</th>
              {totals.map(([value, name]) => (
                <th key={name} scope="col" className="border-r border-[#e5e5e5] p-0 pb-[2px] pr-[3px] text-right align-bottom font-normal leading-[10px]">
                  <span className="block text-[9px] leading-[14px] text-[#222]">{value}</span>
                  {name}
                </th>
              ))}
            </tr>
          </thead>
          <tbody>
            <GroupRow title="应用 (4)" />
            {apps.map((row) => (
              <ProcessRow key={row.name} row={row} />
            ))}
            <GroupRow title="后台进程 (48)" />
            {background.map((row) => (
              <ProcessRow key={row.name} row={row} />
            ))}
            <tr className="h-1">
              <td colSpan={2} className="p-0" />
              <td className="border-r border-[#efe3b8] bg-[#fff4c4] p-0" />
              <td className="border-r border-[#efe3b8] bg-[#fbe9a2] p-0" />
              <td className="border-r border-[#efe3b8] bg-[#fff4c4] p-0" />
              <td className="border-r border-[#efe3b8] bg-[#fff4c4] p-0" />
            </tr>
          </tbody>
        </table>
        <div className="mt-[33px] flex w-[9px] flex-col items-center bg-[#f0f0f0]">
          <ChevronUp className="my-px h-[7px] w-[7px]" strokeWidth={3} />
          <span className="h-[19px] w-full bg-[#cdcdcd]" />
          <ChevronDown className="mt-auto h-[7px] w-[7px]" strokeWidth={3} />
        </div>
      </div>
      <div className="flex h-[10px] items-center border-b border-[#b5b5b5] bg-[#f0f0f0] pr-[9px]">
        <ChevronRight className="mx-px h-[7px] w-[7px] rotate-180" strokeWidth={3} />
        <span className="h-full w-[199px] bg-[#cdcdcd]" />
        <ChevronRight className="ml-auto h-[7px] w-[7px]" strokeWidth={3} />
      </div>
      <footer className="flex h-[27px] items-center justify-between pl-1 pr-[6px]">
        <button type="button" className="flex items-center gap-1">
          <span className="flex h-[11px] w-[11px] items-center justify-center rounded-full border border-gray-500">
            <ChevronUp className="h-[6px] w-[6px]" strokeWidth={2} />
          </span>
          简略信息(D)
        </button>
        <button type="button" disabled className="h-3 w-[46px] bg-[#cccccc] text-[#8590a0]">
          结束任务(E)
        </button>
      </footer>
    </section>
  );
}

/* ---------- taskbar ---------- */

function Taskbar() {
  return (
    <footer className="relative flex h-[22px] items-stretch justify-between bg-gradient-to-r from-[#22363f] via-[#1e3040] to-[#14233c] text-white">
      <div className="flex">
        <button type="button" aria-label="开始" className="flex w-[27px] items-center justify-center">
          <svg viewBox="0 0 10 10" className="h-[9px] w-[9px]" fill="#fff">
            <path d="M0 1.400 L4.500 .8 V4.700 H0Z M5.200 .7 L10 0 V4.700 H5.200Z M0 5.300 H4.500 V9.200 L0 8.600Z M5.200 5.300 H10 V10 L5.200 9.300Z" />
          </svg>
        </button>
        <button type="button" aria-label="搜索" className="flex w-[27px] items-center justify-center">
          <svg viewBox="0 0 10 10" className="h-[10px] w-[10px]" fill="none" stroke="#fff" strokeWidth="1"><circle cx="6" cy="3.800" r="3" /><path d="M4 6 L.7 9.300" /></svg>
        </button>
        <button type="button" aria-label="Cortana" className="flex w-[27px] items-center justify-center">
          <span className="h-[9px] w-[9px] rounded-full border border-white" />
        </button>
        <button type="button" aria-label="任务视图" className="flex w-[27px] items-center justify-center">
          <svg viewBox="0 0 10 10" className="h-[10px] w-[10px]" fill="none" stroke="#fff" strokeWidth=".9">
            <path d="M.7 .5 V2 H6.300 V.5 M.7 9.500 V8 H6.300 V9.500 M.7 3.500 H6.300 V6.500 H.7Z M8.800 .5 V9.500 M8 3.500 H9.600" />
          </svg>
        </button>
        <button type="button" aria-label="Edge" className="flex w-[29px] items-center justify-center">
          <EdgeIcon />
        </button>
        <button type="button" aria-label="资源管理器" className="flex w-[27px] items-center justify-center bg-[#4b5a62]">
          <ExplorerIcon className="h-[11px] w-[13px]" />
        </button>
        <button type="button" aria-label="微信" className="flex w-7 items-center justify-center">
          <WechatIcon className="h-3 w-[14px]" />
        </button>
        <button type="button" aria-label="任务管理器" className="flex w-7 items-center justify-center">
          <TaskIcon className="h-[13px] w-[13px]" />
        </button>
      </div>
      <div className="flex items-center text-center leading-[9px]">
        <div className="w-[42px]">
          <div>30℃</div>
          <div>CPU温度</div>
        </div>
        <ChevronUp className="ml-[3px] mr-[2px] h-[10px] w-[10px]" strokeWidth={2} />
        <svg viewBox="0 0 10 10" className="mx-[2px] h-[10px] w-[10px]" fill="none" stroke="#fff" strokeWidth=".9">
          <path d="M3 1.500 H9.500 V6.500 H3Z M6.300 6.500 V8.800 M4 9 H8.500 M.5 .5 V3 H3 M1.700 3 V9 H4" />
        </svg>
        <svg viewBox="0 0 12 10" className="mx-px h-[10px] w-3" fill="none" stroke="#fff" strokeWidth=".9">
          <path d="M.6 3.500 H2.300 L5 1.300 V8.700 L2.300 6.500 H.6Z M6.700 3.500 C7.400 4.500 7.400 5.500 6.700 6.500 M8.300 2.500 C9.500 4 9.500 6 8.300 7.500" />
        </svg>
        <button type="button" aria-label="输入法" className="w-[13px] text-[9px]">中</button>
        <time className="w-[40px]">
          <span className="block">10:21</span>
          <span className="block">2020/4/13</span>
        </time>
        <button type="button" aria-label="通知" className="relative flex w-[27px] items-center justify-center">
          <svg viewBox="0 0 10 10" className="h-[10px] w-[10px]" fill="#fff">
            <path d="M.5 .5 H9.500 V7.500 H5 L3 9.500 V7.500 H.5Z" />
            <path d="M2 2.700 H8 M2 4.200 H8" stroke="#1b2c42" strokeWidth=".7" />
          </svg>
          <span className="absolute bottom-[-4px] right-[5px] h-2 w-2 rounded-full border border-white bg-[#1b2c42] leading-[6px]">2</span>
        </button>
      </div>
    </footer>
  );
}

export default function App() {
  return (
    <div className="relative flex h-screen flex-col overflow-hidden font-['Open_Sans','Noto_Sans_CJK_SC',sans-serif] text-[7px] leading-[10px] text-[#1a1a1a]">
      <Wallpaper />
      <main className="relative flex-1">
        <DesktopIcons />
        <ExplorerWindow />
        <ContextMenu />
        <TaskManager />
      </main>
      <Taskbar />
    </div>
  );
}
